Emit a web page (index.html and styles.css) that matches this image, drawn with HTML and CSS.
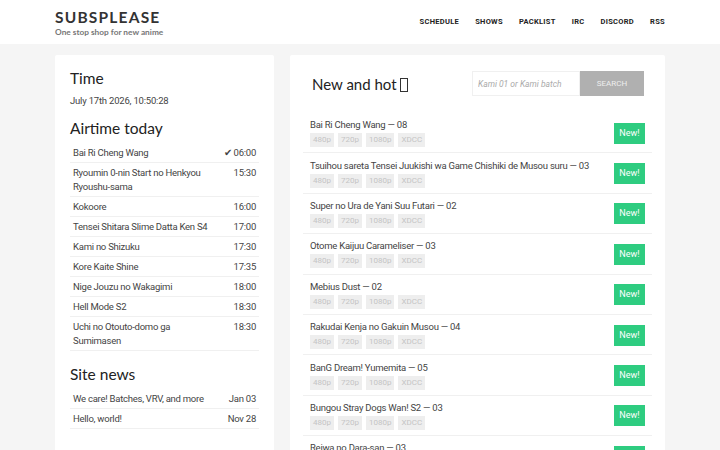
FILE: index.html
```html
<!DOCTYPE html>
<html lang="en">
<head>
    <meta charset="UTF-8">
    <meta name="viewport" content="width=device-width, initial-scale=1.0">
    <title>SubsPlease</title>
    <link rel="stylesheet" href="styles.css">
</head>
<body>
    <header class="topbar">
        <div class="wrap topbar-inner">
            <div class="brand">
                <div class="logo">SUBSPLEASE</div>
                <div class="tagline">One stop shop for new anime</div>
            </div>
            <nav class="nav">
                <a href="#">Schedule</a>
                <a href="#">Shows</a>
                <a href="#">Packlist</a>
                <a href="#">IRC</a>
                <a href="#">Discord</a>
                <a href="#">RSS</a>
            </nav>
        </div>
    </header>

    <main class="wrap content">
        <aside class="card side">
            <h2>Time</h2>
            <p class="clock">July 17th 2026, 10:50:28</p>

            <h2>Airtime today</h2>
            <table class="list">
                <tr><td>Bai Ri Cheng Wang</td><td class="when">&#10004; 06:00</td></tr>
                <tr><td>Ryoumin 0-nin Start no Henkyou Ryoushu-sama</td><td class="when">15:30</td></tr>
                <tr><td>Kokoore</td><td class="when">16:00</td></tr>
                <tr><td>Tensei Shitara Slime Datta Ken S4</td><td class="when">17:00</td></tr>
                <tr><td>Kami no Shizuku</td><td class="when">17:30</td></tr>
                <tr><td>Kore Kaite Shine</td><td class="when">17:35</td></tr>
                <tr><td>Nige Jouzu no Wakagimi</td><td class="when">18:00</td></tr>
                <tr><td>Hell Mode S2</td><td class="when">18:30</td></tr>
                <tr><td>Uchi no Otouto-domo ga Sumimasen</td><td class="when">18:30</td></tr>
            </table>

            <h2>Site news</h2>
            <table class="list">
                <tr><td>We care! Batches, VRV, and more</td><td class="when">Jan 03</td></tr>
                <tr><td>Hello, world!</td><td class="when">Nov 28</td></tr>
            </table>
        </aside>

        <section class="card releases">
            <div class="releases-head">
                <h2>New and hot <span class="tofu"></span></h2>
                <form class="search">
                    <input type="text" placeholder="Kami 01 or Kami batch">
                    <button type="button">Search</button>
                </form>
            </div>

            <div class="release-list" id="releaseList"></div>
        </section>
    </main>

    <script>
        const releases = [
            'Bai Ri Cheng Wang — 08',
            'Tsuihou sareta Tensei Juukishi wa Game Chishiki de Musou suru — 03',
            'Super no Ura de Yani Suu Futari — 02',
            'Otome Kaijuu Carameliser — 03',
            'Mebius Dust — 02',
            'Rakudai Kenja no Gakuin Musou — 04',
            'BanG Dream! Yumemita — 05',
            'Bungou Stray Dogs Wan! S2 — 03',
            'Reiwa no Dara-san — 03'
        ];

        const list = document.getElementById('releaseList');
        releases.forEach(title => {
            const row = document.createElement('div');
            row.className = 'release';
            row.innerHTML =
                '<div class="release-info">' +
                    '<div class="release-title">' + title + '</div>' +
                    '<div class="tags"><span>480p</span><span>720p</span><span>1080p</span><span>XDCC</span></div>' +
                '</div>' +
                '<span class="badge">New!</span>';
            list.appendChild(row);
        });
    </script>
</body>
</html>
```

FILE: styles.css
```css
body {
    margin: 0;
    background-color: #f5f5f5;
    color: #333;
    font-family: Roboto, "Liberation Sans", sans-serif;
    overflow: hidden;
    height: 450px;
}

.wrap {
    width: 610px;
    margin: 0 auto;
}

.topbar {
    background-color: #fff;
    height: 44px;
}

.topbar-inner {
    display: flex;
    justify-content: space-between;
    align-items: center;
    height: 44px;
}

.logo {
    font-family: Lato, "Open Sans", sans-serif;
    font-weight: 700;
    font-size: 15.5px;
    letter-spacing: 1.2px;
    color: #333;
    line-height: 18px;
    margin-top: 1px;
}

.tagline {
    font-family: Lato, "Open Sans", sans-serif;
    font-weight: 700;
    font-size: 8.3px;
    color: #777;
    margin-top: 1px;
}

.nav {
    display: flex;
    gap: 16px;
    margin-top: -1px;
}

.nav a {
    font-size: 7.5px;
    font-weight: 700;
    text-transform: uppercase;
    letter-spacing: 0.3px;
    color: #222;
    text-decoration: none;
}

.content {
    display: flex;
    align-items: flex-start;
    gap: 16px;
    margin-top: 11px;
}

.card {
    background-color: #fff;
    border-radius: 2px;
}

.side {
    width: 189px;
    padding: 12px 15px 60px;
}

.side h2 {
    font-family: Lato, "Open Sans", sans-serif;
    font-weight: 400;
    font-size: 15.5px;
    color: #222;
    margin: 0 0 6px;
    line-height: 22px;
}

.clock {
    font-size: 9.5px;
    letter-spacing: -0.2px;
    color: #444;
    margin: 0 0 11px;
}

.list {
    width: 100%;
    border-collapse: collapse;
    margin-bottom: 12px;
    margin-top: -2px;
}

.list td {
    font-size: 9.5px;
    letter-spacing: -0.25px;
    color: #444;
    line-height: 14px;
    padding: 3px 3px 2px;
    border-bottom: 1px solid #f0f0f0;
    vertical-align: top;
}

.list td.when {
    text-align: right;
    white-space: nowrap;
    padding-left: 8px;
}

.releases {
    width: 375px;
    padding: 16px 13px 0;
    box-sizing: border-box;
    height: 420px;
}

.releases-head {
    display: flex;
    justify-content: space-between;
    align-items: center;
    padding: 0 8px 0 9px;
    margin-bottom: 17px;
}

.releases-head h2 {
    font-family: Lato, "Open Sans", sans-serif;
    font-weight: 400;
    font-size: 15px;
    color: #222;
    margin: 0;
    display: flex;
    align-items: center;
    gap: 3px;
}

.tofu {
    display: inline-block;
    width: 6px;
    height: 12px;
    border: 1px solid #333;
    margin-top: 2px;
}

.search {
    display: flex;
}

.search input {
    width: 108px;
    height: 25px;
    box-sizing: border-box;
    border: 1px solid #f0f0f0;
    padding: 0 5px;
    font-family: Roboto, sans-serif;
    font-size: 8.5px;
    font-style: italic;
    outline: none;
}

.search input::placeholder {
    color: #aaa;
}

.search button {
    width: 64px;
    height: 25px;
    border: none;
    background-color: #b0b0b0;
    color: #eee;
    font-family: Roboto, sans-serif;
    font-size: 8px;
    text-transform: uppercase;
}

.release {
    display: flex;
    justify-content: space-between;
    align-items: center;
    padding: 6px 7px;
    border-bottom: 1px solid #f0f0f0;
    height: 27.4px;
}

.release-title {
    font-size: 9.5px;
    letter-spacing: -0.25px;
    color: #444;
    line-height: 13px;
}

.tags {
    display: flex;
    gap: 4px;
    margin-top: 2px;
}

.tags span {
    background-color: #eee;
    color: #c4c4c4;
    font-size: 8px;
    padding: 2px 3px;
    line-height: 10px;
}

.badge {
    background-color: #2ecc80;
    color: #fff;
    font-size: 9px;
    font-weight: 400;
    width: 31px;
    height: 21px;
    line-height: 21px;
    text-align: center;
    margin-top: 1px;
}
```
